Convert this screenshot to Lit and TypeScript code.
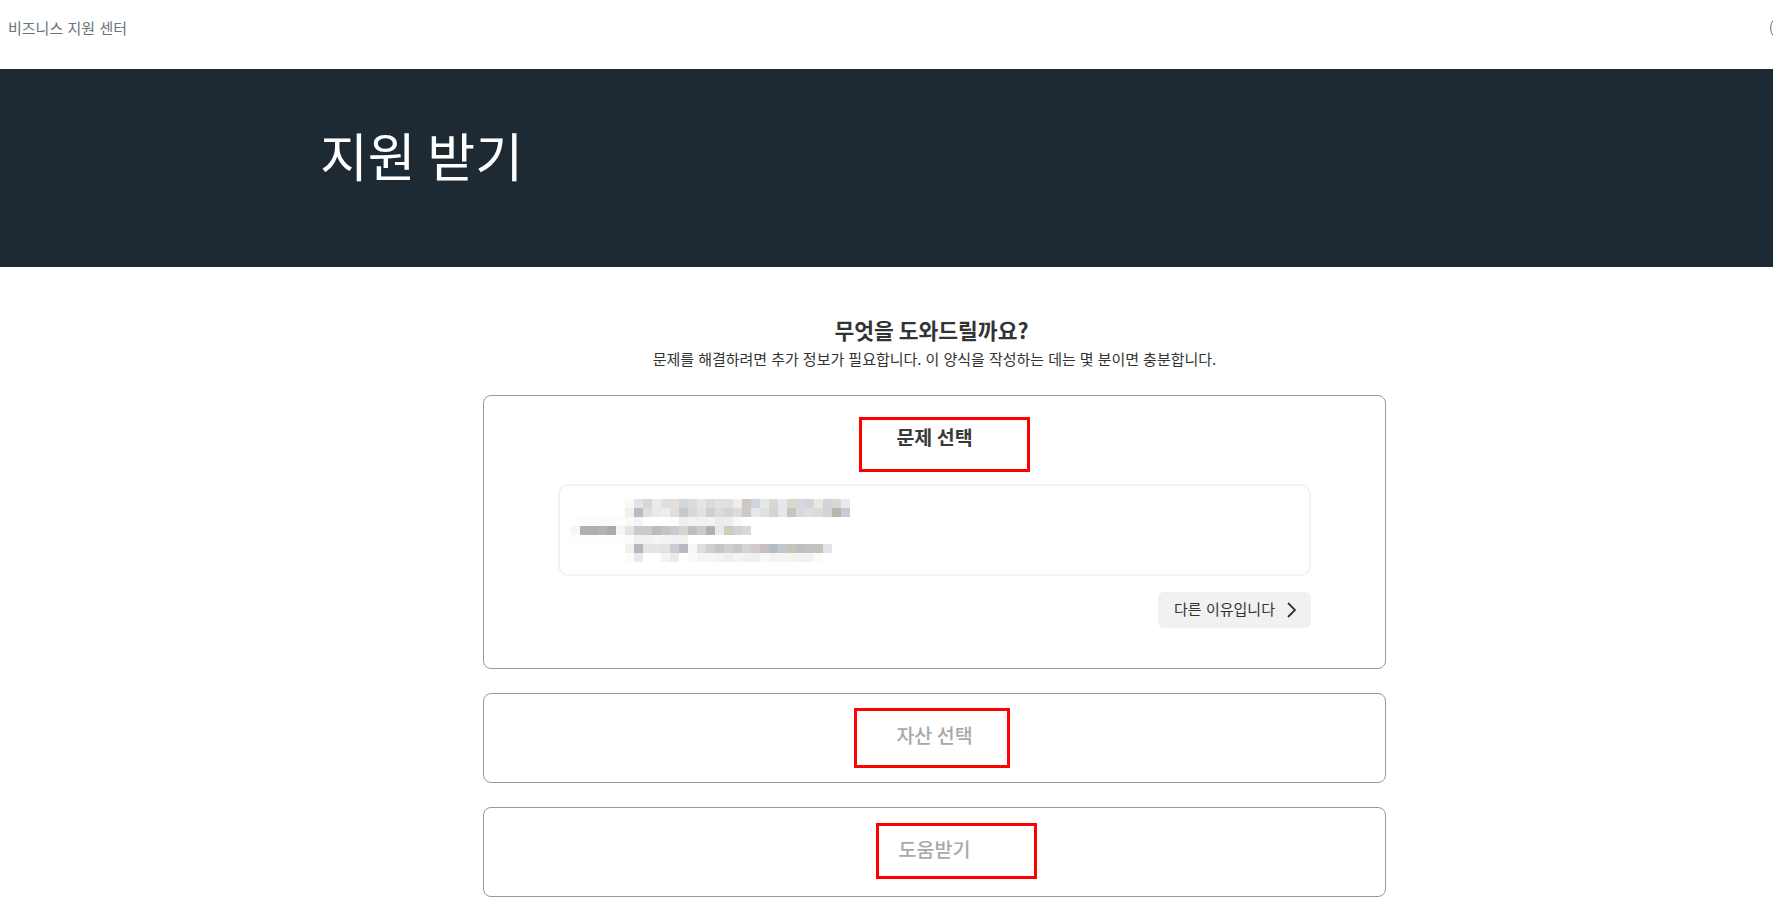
import { LitElement, html, css } from "lit";
import { customElement } from "lit/decorators.js";

const W = "ffffff";
const rows: string[][] = [
  [W,W,W,W,W,W,"f9f9f7","e2e3e6","d7d7d6","e9ecec","e0dedf","e3dfdb","d1d8dd","dbdbd9","e4e6e9","dcdbd7","e1e2e3","dfe0e3","eeeeea","cdc9c2","d3d4db","e3e7e5","d8d8d3","e6e6ec","d9d6cb","d6d6de","d3d3d8","e8eae2","d3d3d9","d8d7d4","e8eaec"],
  [W,W,W,W,W,W,"f3efeb","b9bac2","e0e0db","e8e9e8","eceeee","e2dfdb","c8c9cc","d8d8d5","e0e2e5","d1cfcb","dadbdd","d4d4d5","dcdcdb","cdcac4","e4e8eb","dfe1df","d5d5d0","e6e6ec","c8c4bc","d8d8e0","dddde3","ded9d3","d2d2d8","b9b4ae","c8cbd3"],
  ["fefefe","fbfbfb","fafafa","fafafa","fafafa","fdfdfd","fbfaf8","f4f5f8",W,W,W,"fdfcf9","edeff1","f4f2ee","f0f1f0","f1f3f3","e9ecef","eeeeec","f9f9f7",W],
  ["f6f6f6","b0b0b0","aeaeae","b2b2b2","aaaaaa","f5f5f5","e5e4e2","cdc8cf","cacaca","c0bbbb","c2c3c7","cdc8d2","d2d5d2","bcc0c0","cbcdc8","b2b2aa","e5eaea","d0ccb8","cfd3d0","d8dad7"],
  ["fefefe","fdfdfd","fdfdfd","fdfdfd","fdfdfd","fefefe","fbfaf8","f0f0f0","f2f1f2","f5f5f8","f2f2ee","f2f0f2","eff0f0"],
  [W,W,W,W,W,W,"f1f0ea","b7b6be","e4e6e3","e4e2ea","e3e3db","cfc9d2","b9b9c0","f8f8f8","dddde6","d0d0ce","c3c6c4","d0d0ca","c8c8ca","d2d6d0","d2cad0","c8c0bc","b5bcc4","c0c8c8","c8c4b8","bcc0c0","c4c0c4","c8c0c0","e4e2ea"],
  [W,W,W,W,W,W,"fcfbf9","eaeaec",W,W,"f4f4f4","ebebeb",W,"fafafa","f5f5f5","f5f5f5","f3f3f3","eeeeee","f3f5f3","f3f0f2","eef0ee","f8f8f8","f3f3f3","f4f4f0","f3f3f0","f2f2f2","f2f2f2","fcfcfc"],
];

@customElement("app-root")
export class AppRoot extends LitElement {
  static styles = css`
    :host {
      display: block;
      height: 905px;
      overflow: hidden;
      background: #fff;
      font-family: "Noto Sans CJK KR", "Noto Sans", sans-serif;
      color: #333;
    }
    .top {
      height: 69px;
      display: flex;
      align-items: center;
      justify-content: space-between;
      padding: 0 0 14px 8px;
      box-sizing: border-box;
    }
    .brand { font-size: 15px; font-weight: 400; word-spacing: 1px; color: #68737d; line-height: 30px; }
    .avatar {
      width: 26px;
      height: 26px;
      border-radius: 50%;
      border: 1.5px solid #68737d;
      box-sizing: border-box;
      margin-right: -23px;
      flex: none;
    }
    .banner {
      height: 198px;
      background: #1d2a34;
      padding: 0 0 0 320px;
      box-sizing: border-box;
    }
    .banner h1 {
      margin: 0;
      padding-top: 44px;
      font-size: 52px;
      font-weight: 400;
      line-height: 84px;
      color: #fff;
    }
    main {
      width: 903px;
      margin-left: 483px;
      padding-top: 50px;
    }
    .intro { text-align: center; }
    .intro h2 { margin: 0; padding-right: 6px; font-size: 21.5px; font-weight: 700; line-height: 26px; color: #333; }
    .intro p { margin: 5px 0 0; font-size: 15px; word-spacing: 0.7px; line-height: 22px; color: #333; }
    .card {
      position: relative;
      margin-top: 24px;
      border: 1px solid #999;
      border-radius: 8px;
      box-sizing: border-box;
      background: #fff;
    }
    .first { margin-top: 25px; height: 274px; padding: 29px 74px 0; }
    .closed { height: 90px; display: flex; align-items: center; justify-content: center; padding-bottom: 6px; }
    .card h3 { margin: 0; text-align: center; font-size: 19.5px; line-height: 24px; font-weight: 700; color: #3a3a3a; }
    .first h3 { margin-bottom: 35px; }
    .closed h3 { color: #a9a9a9; font-weight: 500; }
    .option {
      height: 92px;
      border: 2px solid #f3f3f3;
      border-radius: 10px;
      box-sizing: border-box;
      padding: 13px 11px;
    }
    .mosaic { display: flex; flex-direction: column; }
    .row { display: flex; height: 9px; }
    .cell { width: 9px; height: 9px; flex: none; }
    .actions { display: flex; justify-content: flex-end; margin-top: 16px; }
    .other {
      height: 36px;
      width: 153px;
      display: flex;
      align-items: center;
      justify-content: space-between;
      box-sizing: border-box;
      padding: 0 15px 0 16px;
      background: #f1f1f1;
      border: 0;
      border-radius: 6px;
      font: inherit;
      font-size: 15px;
      word-spacing: 1px;
      color: #333;
    }
    .other span { padding-bottom: 3px; }
    .other svg { width: 9px; height: 16px; flex: none; }
    .mark {
      position: absolute;
      border: 3px solid #ff0000;
      box-sizing: border-box;
      pointer-events: none;
    }
    .m1 { left: 375px; top: 21px; width: 171px; height: 55px; }
    .m2 { left: 370px; top: 14px; width: 156px; height: 60px; }
    .m3 { left: 392px; top: 15px; width: 161px; height: 56px; }
  `;

  render() {
    return html`
      <header class="top">
        <span class="brand">비즈니스 지원 센터</span>
        <span class="avatar"></span>
      </header>
      <section class="banner"><h1>지원 받기</h1></section>
      <main>
        <div class="intro">
          <h2>무엇을 도와드릴까요?</h2>
          <p>문제를 해결하려면 추가 정보가 필요합니다. 이 양식을 작성하는 데는 몇 분이면 충분합니다.</p>
        </div>
        <section class="card first">
          <h3>문제 선택</h3>
          <div class="option">
            <div class="mosaic">
              ${rows.map(
                (r) => html`<div class="row">${r.map(
                  (c) => html`<span class="cell" style="background:#${c}"></span>`
                )}</div>`
              )}
            </div>
          </div>
          <div class="actions">
            <button class="other">
              <span>다른 이유입니다</span>
              <svg viewBox="0 0 9 16" fill="none" stroke="#333" stroke-width="1.8">
                <path d="M1 1l7 7-7 7" />
              </svg>
            </button>
          </div>
          <div class="mark m1"></div>
        </section>
        <section class="card closed">
          <h3>자산 선택</h3>
          <div class="mark m2"></div>
        </section>
        <section class="card closed">
          <h3>도움받기</h3>
          <div class="mark m3"></div>
        </section>
      </main>
    `;
  }
}
